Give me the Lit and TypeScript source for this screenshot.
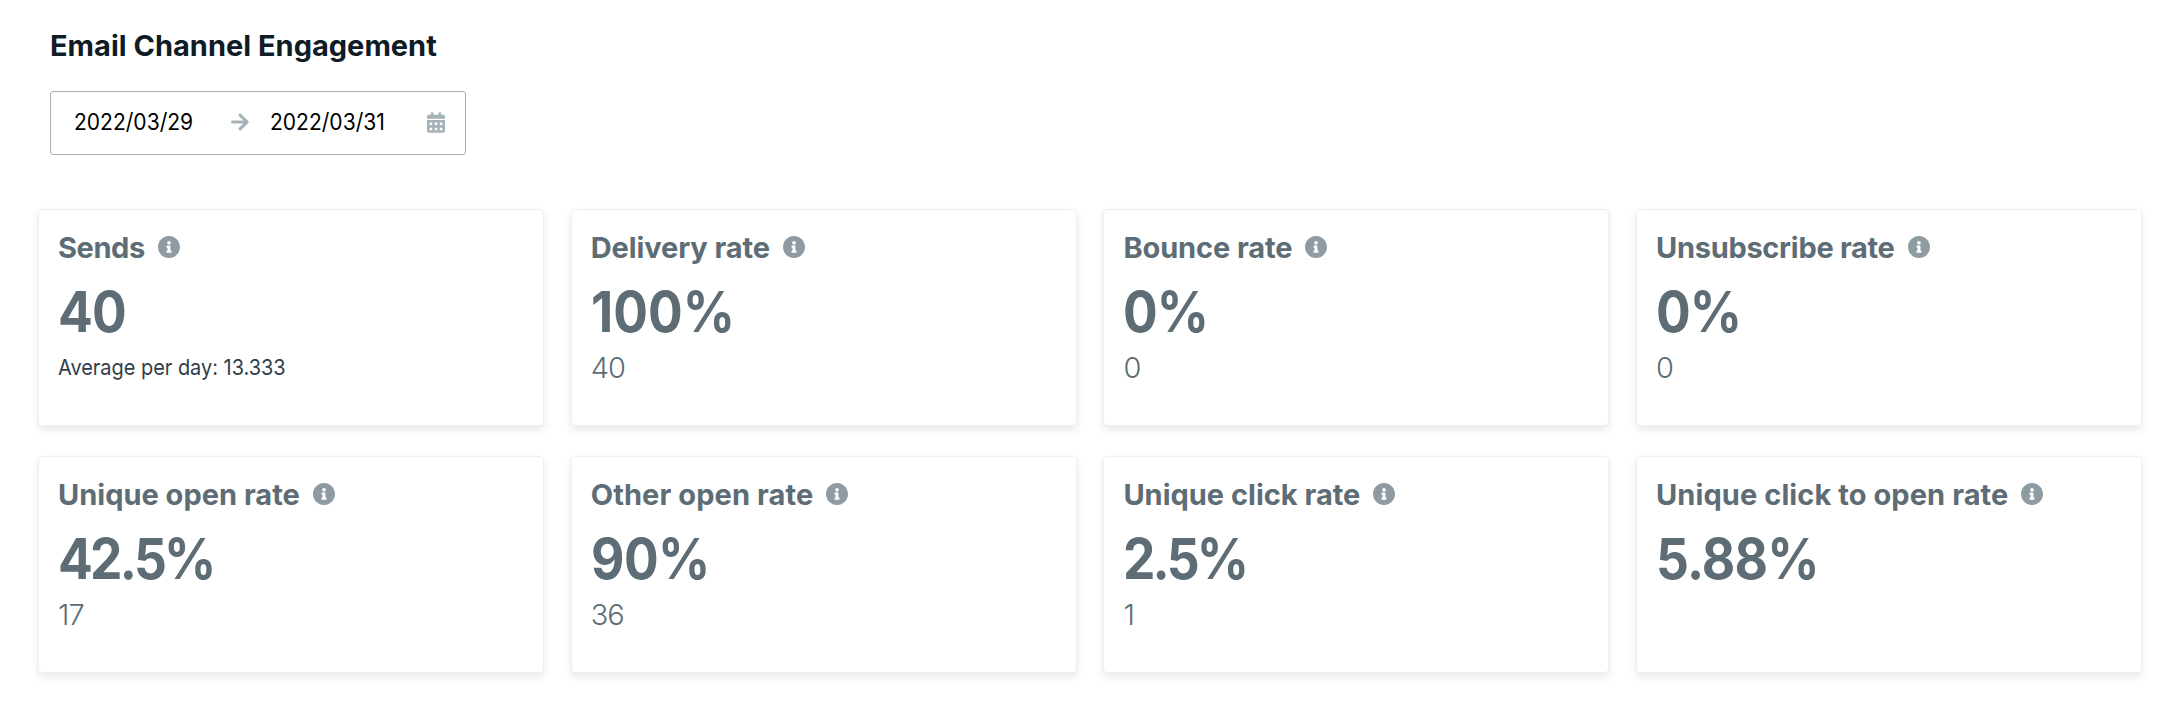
import { LitElement, html, css, nothing } from "lit";
import { customElement, property } from "lit/decorators.js";
import { styleMap } from "lit/directives/style-map.js";

interface Metric {
  label: string;
  // letter spacing of the label, in px
  labelTracking: number;
  value: string;
  // letter spacing of the big figure, in px
  tracking: number;
  count?: string;
  note?: string;
}

const METRICS: Metric[] = [
  { label: "Sends", labelTracking: -0.4, value: "40", tracking: -1, note: "Average per day: 13.333" },
  { label: "Delivery rate", labelTracking: -0.1, value: "100%", tracking: 0, count: "40" },
  { label: "Bounce rate", labelTracking: -0.1, value: "0%", tracking: -1, count: "0" },
  { label: "Unsubscribe rate", labelTracking: -0.3, value: "0%", tracking: -1, count: "0" },
  { label: "Unique open rate", labelTracking: 0, value: "42.5%", tracking: -3, count: "17" },
  { label: "Other open rate", labelTracking: 0.1, value: "90%", tracking: -0.6, count: "36" },
  { label: "Unique click rate", labelTracking: 0, value: "2.5%", tracking: -3.1, count: "1" },
  { label: "Unique click to open rate", labelTracking: 0.08, value: "5.88%", tracking: -0.9 },
];

@customElement("metric-card")
export class MetricCard extends LitElement {
  @property({ attribute: false }) metric!: Metric;

  static styles = css`
    :host {
      display: block;
      box-sizing: border-box;
      height: 217px;
      padding: 20px 19px 0;
      border: 1px solid #efefef;
      border-radius: 4px;
      background: #fff;
      box-shadow: 0 4px 8px rgba(0, 0, 0, 0.09);
      color: #5d6c75;
    }
    .label {
      display: flex;
      align-items: center;
      gap: 13px;
      font-size: 29px;
      font-weight: 700;
      line-height: 36px;
      white-space: nowrap;
    }
    .info {
      width: 22px;
      height: 22px;
      flex: none;
      margin-top: -2px;
      fill: #8f9ba2;
    }
    .value {
      margin-top: 16px;
      font-size: 56px;
      font-weight: 700;
      line-height: 60px;
      transform: scaleX(0.92);
      transform-origin: left;
    }
    .count {
      margin-top: 8px;
      font-size: 29px;
      font-weight: 350;
      line-height: 36px;
      letter-spacing: -1px;
    }
    .note {
      margin-top: 7px;
      font-size: 22px;
      line-height: 36px;
      color: #30404b;
      transform: scaleX(0.906);
      transform-origin: left;
    }
  `;

  render() {
    const m = this.metric;
    return html`
      <div class="label">
        <span style=${styleMap({ letterSpacing: `${m.labelTracking}px` })}>${m.label}</span>
        <svg class="info" viewBox="8 8 496 496">
          <path d="M256 8C119.043 8 8 119.083 8 256c0 136.997 111.043 248 248 248s248-111.003 248-248C504 119.083 392.957 8 256 8zm0 110c23.196 0 42 18.804 42 42s-18.804 42-42 42-42-18.804-42-42 18.804-42 42-42zm56 254c0 6.627-5.373 12-12 12h-88c-6.627 0-12-5.373-12-12v-24c0-6.627 5.373-12 12-12h12v-64h-12c-6.627 0-12-5.373-12-12v-24c0-6.627 5.373-12 12-12h64c6.627 0 12 5.373 12 12v100h12c6.627 0 12 5.373 12 12v24z"/>
        </svg>
      </div>
      <div class="value" style=${styleMap({ letterSpacing: `${m.tracking}px` })}>${m.value}</div>
      ${m.count ? html`<div class="count">${m.count}</div>` : nothing}
      ${m.note ? html`<div class="note">${m.note}</div>` : nothing}
    `;
  }
}

@customElement("app-root")
export class AppRoot extends LitElement {
  static styles = css`
    :host {
      display: block;
      box-sizing: border-box;
      height: 718px;
      padding: 28px 38px 0;
      overflow: hidden;
      background: #fff;
      font-family: Inter, "Liberation Sans", sans-serif;
    }
    .title {
      margin: 0 0 27px 12px;
      font-size: 29px;
      font-weight: 700;
      line-height: 36px;
      color: #0f1c26;
    }
    .range {
      display: flex;
      align-items: center;
      box-sizing: border-box;
      width: 416px;
      height: 64px;
      margin: 0 0 54px 12px;
      padding: 0 20px 0 23px;
      border: 1px solid #a5b2b7;
      border-radius: 3px;
    }
    .date {
      padding-bottom: 2px;
      font-size: 23px;
      line-height: 30px;
      color: #000;
      transform: scaleX(0.915);
      transform-origin: left;
    }
    .start {
      width: 157px;
    }
    .end {
      flex: 1;
      margin-left: 21px;
    }
    .arrow {
      width: 18px;
      height: 20px;
      margin-top: -2px;
      fill: #a5b2b7;
    }
    .calendar {
      width: 18px;
      height: 21px;
      margin-top: -1px;
      fill: #a5b2b7;
    }
    .cards {
      display: grid;
      grid-template-columns: repeat(4, 506px);
      gap: 30px 26.7px;
    }
  `;

  render() {
    return html`
      <h1 class="title">Email Channel Engagement</h1>
      <div class="range">
        <span class="date start">2022/03/29</span>
        <svg class="arrow" viewBox="0 0 448 512">
          <path d="M190.5 66.9l22.2-22.2c9.4-9.4 24.6-9.4 33.9 0L441 239c9.4 9.4 9.4 24.6 0 33.9L246.6 467.3c-9.4 9.4-24.6 9.4-33.9 0l-22.2-22.2c-9.5-9.5-9.3-25 .4-34.3L311.4 296H24c-13.3 0-24-10.7-24-24v-32c0-13.3 10.7-24 24-24h287.4L190.9 101.2c-9.8-9.3-10-24.8-.4-34.3z"/>
        </svg>
        <span class="date end">2022/03/31</span>
        <svg class="calendar" viewBox="0 0 448 512">
          <path fill-rule="evenodd" d="M400 64h-48V16c0-8.800-7.200-16-16-16h-32c-8.800 0-16 7.200-16 16v48H160V16c0-8.800-7.200-16-16-16h-32c-8.800 0-16 7.200-16 16v48H48C21.500 64 0 85.500 0 112v48h448v-48c0-26.500-21.500-48-48-48zM0 192h448v272c0 26.500-21.500 48-48 48H48c-26.500 0-48-21.500-48-48zM64 256v64h64v-64zM192 256v64h64v-64zM320 256v64h64v-64zM64 384v64h64v-64zM192 384v64h64v-64zM320 384v64h64v-64z"/>
        </svg>
      </div>
      <div class="cards">
        ${METRICS.map((m) => html`<metric-card .metric=${m}></metric-card>`)}
      </div>
    `;
  }
}
